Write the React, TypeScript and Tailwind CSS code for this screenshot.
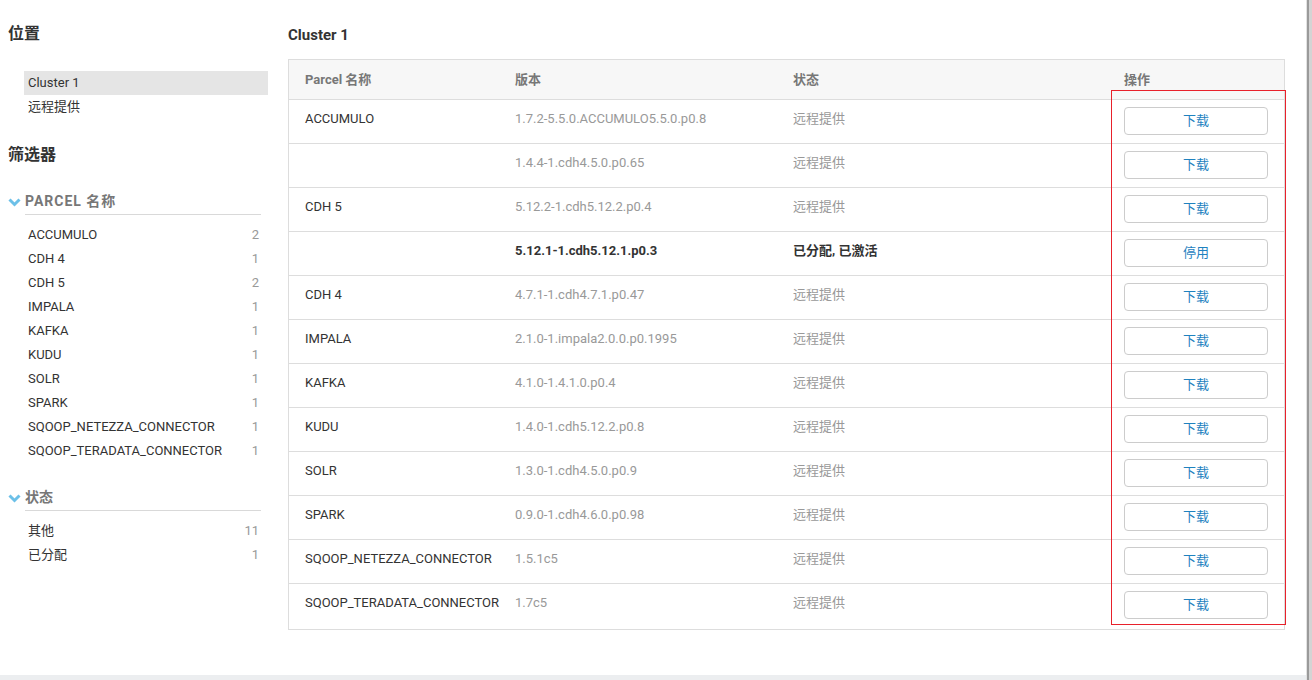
import React from 'react';

const font = { fontFamily: 'Roboto, "Noto Sans CJK SC", sans-serif' };

const parcelFilters = [
    ['ACCUMULO', 2],
    ['CDH 4', 1],
    ['CDH 5', 2],
    ['IMPALA', 1],
    ['KAFKA', 1],
    ['KUDU', 1],
    ['SOLR', 1],
    ['SPARK', 1],
    ['SQOOP_NETEZZA_CONNECTOR', 1],
    ['SQOOP_TERADATA_CONNECTOR', 1],
];

const statusFilters = [
    ['其他', 11],
    ['已分配', 1],
];

type Row = { name: string; version: string; status: string; action: string; active?: boolean };

const rows: Row[] = [
    { name: 'ACCUMULO', version: '1.7.2-5.5.0.ACCUMULO5.5.0.p0.8', status: '远程提供', action: '下载' },
    { name: '', version: '1.4.4-1.cdh4.5.0.p0.65', status: '远程提供', action: '下载' },
    { name: 'CDH 5', version: '5.12.2-1.cdh5.12.2.p0.4', status: '远程提供', action: '下载' },
    { name: '', version: '5.12.1-1.cdh5.12.1.p0.3', status: '已分配, 已激活', action: '停用', active: true },
    { name: 'CDH 4', version: '4.7.1-1.cdh4.7.1.p0.47', status: '远程提供', action: '下载' },
    { name: 'IMPALA', version: '2.1.0-1.impala2.0.0.p0.1995', status: '远程提供', action: '下载' },
    { name: 'KAFKA', version: '4.1.0-1.4.1.0.p0.4', status: '远程提供', action: '下载' },
    { name: 'KUDU', version: '1.4.0-1.cdh5.12.2.p0.8', status: '远程提供', action: '下载' },
    { name: 'SOLR', version: '1.3.0-1.cdh4.5.0.p0.9', status: '远程提供', action: '下载' },
    { name: 'SPARK', version: '0.9.0-1.cdh4.6.0.p0.98', status: '远程提供', action: '下载' },
    { name: 'SQOOP_NETEZZA_CONNECTOR', version: '1.5.1c5', status: '远程提供', action: '下载' },
    { name: 'SQOOP_TERADATA_CONNECTOR', version: '1.7c5', status: '远程提供', action: '下载' },
];

const Chevron = () => (
    <svg width="13" height="9" viewBox="0 0 13 9" className="shrink-0">
        <polyline points="1.5,1.5 6.5,6.5 11.5,1.5" fill="none" stroke="#6cc0e8" strokeWidth="3" />
    </svg>
);

const FilterSection = ({ title, items, upper }: { title: string; items: (string | number)[][]; upper?: boolean }) => (
    <div>
        <div className="flex items-end">
            <div className="w-[17px] h-[25px] flex items-center">
                <Chevron />
            </div>
            <div
                className={`w-[236px] h-[25px] leading-[22px] border-b border-[#d9d9d9] text-[14px] font-bold text-[#777] ${upper ? 'tracking-[1px]' : ''}`}
            >
                {title}
            </div>
        </div>
        <div className="ml-[17px] w-[236px] mt-2">
            {items.map(([label, count]) => (
                <div key={label as string} className="h-6 flex items-center justify-between pl-[3px] pr-[2px] text-[13px]">
                    <span className="text-[#333]">{label}</span>
                    <span className="text-[#999]">{count}</span>
                </div>
            ))}
        </div>
    </div>
);

export default function App() {
    return (
        <div className="relative w-full h-[680px] flex bg-white overflow-hidden" style={font}>
            <div className="flex-1 flex flex-col">
                <div className="flex-1 flex">
                    {/* sidebar */}
                    <aside className="w-[268px] pl-2 pt-[22px] shrink-0">
                        <h2 className="text-base leading-6 font-bold text-[#333]">位置</h2>
                        <ul className="mt-[25px] ml-4 text-[13px] text-[#333]">
                            <li className="h-6 leading-6 px-1 bg-[#e5e5e5]">Cluster 1</li>
                            <li className="h-6 leading-6 px-1">远程提供</li>
                        </ul>
                        <h2 className="mt-6 text-base leading-6 font-bold text-[#333]">筛选器</h2>
                        <div className="mt-[23px]">
                            <FilterSection title="PARCEL 名称" items={parcelFilters} upper />
                        </div>
                        <div className="mt-[23px]">
                            <FilterSection title="状态" items={statusFilters} />
                        </div>
                    </aside>

                    {/* main */}
                    <main className="flex-1 pl-5 pr-[21px] pt-6">
                        <h1 className="text-[15px] leading-[22px] font-bold text-[#333]">Cluster 1</h1>
                        <div className="mt-[13px] border border-[#ddd] text-[13px]">
                            <div className="grid grid-cols-[210px_278px_331px_1fr] h-[40px] bg-[#f7f7f7] border-b border-[#ddd] items-center font-bold text-[#777]">
                                <div className="pl-4">Parcel 名称</div>
                                <div className="pl-4">版本</div>
                                <div className="pl-4">状态</div>
                                <div className="pl-4">操作</div>
                            </div>
                            {rows.map((r, i) => (
                                <div
                                    key={i}
                                    className={`grid grid-cols-[210px_278px_331px_1fr] ${i === rows.length - 1 ? 'h-[45px]' : 'h-[44px] border-b border-[#ddd]'}`}
                                >
                                    <div className="pl-4 pt-[9px] leading-5 text-[#333] whitespace-nowrap">{r.name}</div>
                                    <div className={`pl-4 pt-[9px] leading-5 whitespace-nowrap ${r.active ? 'font-bold text-[#333]' : 'text-[#999]'}`}>
                                        {r.version}
                                    </div>
                                    <div className={`pl-4 pt-[9px] leading-5 ${r.active ? 'font-bold text-[#333]' : 'text-[#999]'}`}>{r.status}</div>
                                    <div className="pl-4 pt-[7px]">
                                        <button className="w-[144px] h-7 border border-[#ccc] rounded-[4px] bg-white text-[13px] text-[#1f82bf]">
                                            {r.action}
                                        </button>
                                    </div>
                                </div>
                            ))}
                        </div>
                    </main>
                </div>
                <div className="h-[5px] bg-[#eceef0]" />
            </div>

            {/* window edge */}
            <div className="w-[6px] flex shrink-0">
                <div className="w-px bg-[#e2e2e2]" />
                <div className="w-[2px] bg-[#9a9a9a]" />
                <div className="flex-1 bg-[#d4d4d4]" />
            </div>

            {/* annotation */}
            <div className="absolute left-[1111px] top-[90px] w-[175px] h-[535px] border border-[#e8212b] pointer-events-none" />
        </div>
    );
}
